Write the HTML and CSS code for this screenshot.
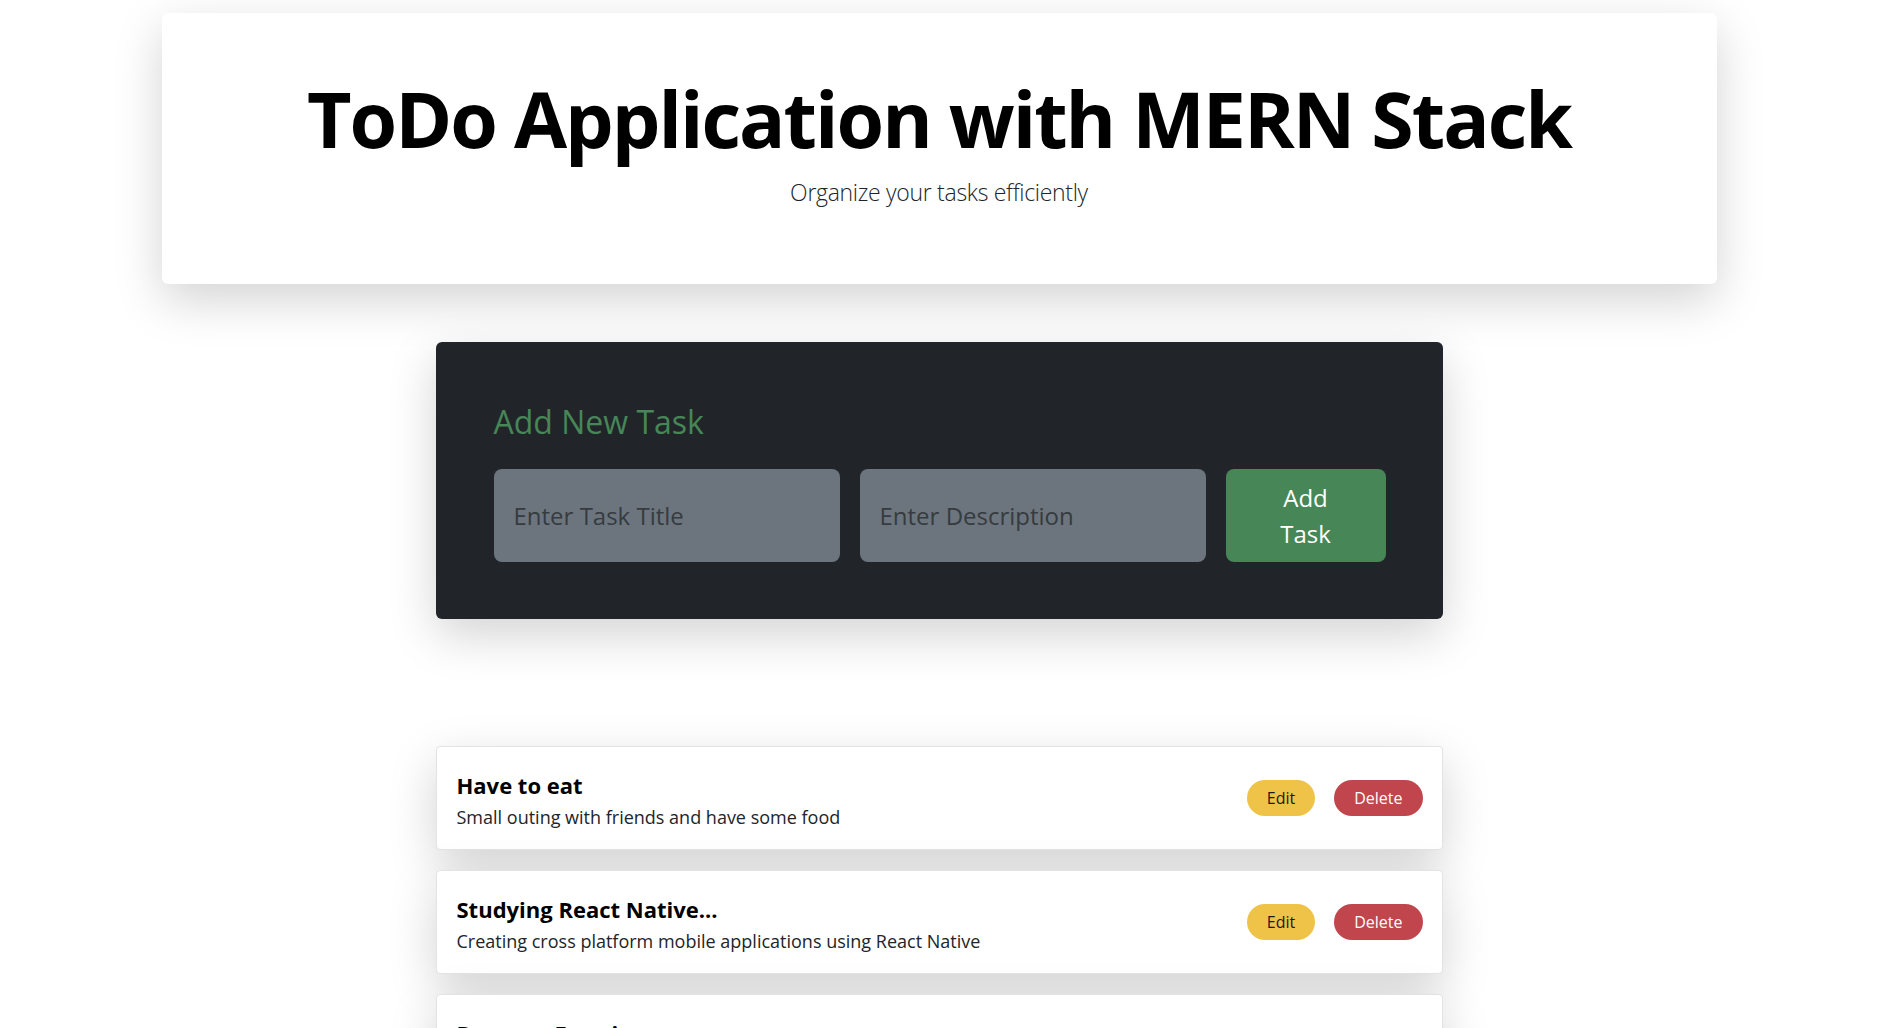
FILE: index.html
```html
<!DOCTYPE html>
<html lang="en">
<head>
<meta charset="utf-8">
<title>ToDo Application with MERN Stack</title>
<link rel="stylesheet" href="styles.css">
</head>
<body>
<div class="page">
  <header class="hero">
    <h1 class="hero-title">ToDo Application with MERN Stack</h1>
    <p class="hero-lead">Organize your tasks efficiently</p>
  </header>

  <section class="add-card">
    <h2 class="add-title">Add New Task</h2>
    <form class="add-form">
      <input class="add-input" type="text" placeholder="Enter Task Title">
      <input class="add-input" type="text" placeholder="Enter Description">
      <button class="add-btn" type="button">Add Task</button>
    </form>
  </section>

  <ul class="task-list">
    <li class="task-card">
      <div class="task-text">
        <h3 class="task-title">Have to eat</h3>
        <p class="task-desc">Small outing with friends and have some food</p>
      </div>
      <div class="task-actions">
        <button class="pill pill-edit" type="button">Edit</button>
        <button class="pill pill-delete" type="button">Delete</button>
      </div>
    </li>
    <li class="task-card">
      <div class="task-text">
        <h3 class="task-title">Studying React Native...</h3>
        <p class="task-desc">Creating cross platform mobile applications using React Native</p>
      </div>
      <div class="task-actions">
        <button class="pill pill-edit" type="button">Edit</button>
        <button class="pill pill-delete" type="button">Delete</button>
      </div>
    </li>
    <li class="task-card">
      <div class="task-text">
        <h3 class="task-title">Daemon Farming</h3>
        <p class="task-desc">Setting up background services for the farm dashboard</p>
      </div>
      <div class="task-actions">
        <button class="pill pill-edit" type="button">Edit</button>
        <button class="pill pill-delete" type="button">Delete</button>
      </div>
    </li>
  </ul>
</div>
</body>
</html>
```

FILE: styles.css
```css
* { box-sizing: border-box; }

html, body {
  margin: 0;
  padding: 0;
  background: #ffffff;
}

body {
  font-family: "Open Sans", "Noto Sans", sans-serif;
  color: #000;
}

.page {
  padding: 13px 2px 40px 0;
}

.hero {
  width: 1555px;
  height: 271px;
  margin: 0 auto;
  background: #fff;
  border-radius: 6px;
  box-shadow: 0 1rem 3rem rgba(0, 0, 0, 0.175);
  text-align: center;
  padding-top: 60px;
}

.hero-title {
  margin: 0;
  font-size: 77px;
  font-weight: 700;
  line-height: 92px;
  letter-spacing: -2px;
}

.hero-lead {
  margin: 9px 0 0;
  font-size: 23px;
  font-weight: 300;
  line-height: 36px;
  letter-spacing: -0.3px;
  color: #212529;
}

.add-card {
  width: 1007px;
  margin: 58px auto 0;
  background: #212529;
  border-radius: 6px;
  box-shadow: 0 1rem 3rem rgba(0, 0, 0, 0.175);
  padding: 60px 57px 57px 58px;
}

.add-title {
  margin: 0 0 27px;
  font-size: 32px;
  font-weight: 500;
  line-height: 40px;
  color: #478657;
}

.add-form {
  display: grid;
  grid-template-columns: minmax(0, 1fr) minmax(0, 1fr) 160px;
  gap: 20px;
  height: 93px;
}

.add-input {
  width: 100%;
  min-width: 0;
  border: none;
  border-radius: 8px;
  background: #6c757d;
  padding: 0 20px;
  font-family: inherit;
  font-size: 24px;
  color: #fff;
  outline: none;
}

.add-input::placeholder {
  color: #363b40;
}

.add-btn {
  border: none;
  border-radius: 8px;
  background: #478657;
  color: #fff;
  font-family: inherit;
  font-size: 24px;
  line-height: 36px;
  padding: 0 30px;
}

.task-list {
  list-style: none;
  width: 1007px;
  margin: 127px auto 0;
  padding: 0;
  display: flex;
  flex-direction: column;
  gap: 20px;
}

.task-card {
  height: 104px;
  background: #fff;
  border: 1px solid #e2e3e5;
  border-radius: 4px;
  box-shadow: 0 1rem 3rem rgba(0, 0, 0, 0.175);
  display: flex;
  align-items: center;
  justify-content: space-between;
  padding: 0 19px 0 20px;
}

.task-text {
  padding-top: 4px;
}

.task-title {
  margin: 0;
  font-size: 22px;
  font-weight: 700;
  line-height: 30px;
}

.task-desc {
  margin: 4px 0 0;
  font-size: 18px;
  line-height: 27px;
  color: #212529;
}

.task-actions {
  display: flex;
  gap: 19px;
}

.pill {
  height: 36px;
  border: none;
  border-radius: 18px;
  padding: 0 20px;
  font-family: inherit;
  font-size: 16px;
}

.pill-edit {
  background: #efc348;
  color: #1a1a1a;
}

.pill-delete {
  background: #c0454d;
  color: #fff;
}
```
